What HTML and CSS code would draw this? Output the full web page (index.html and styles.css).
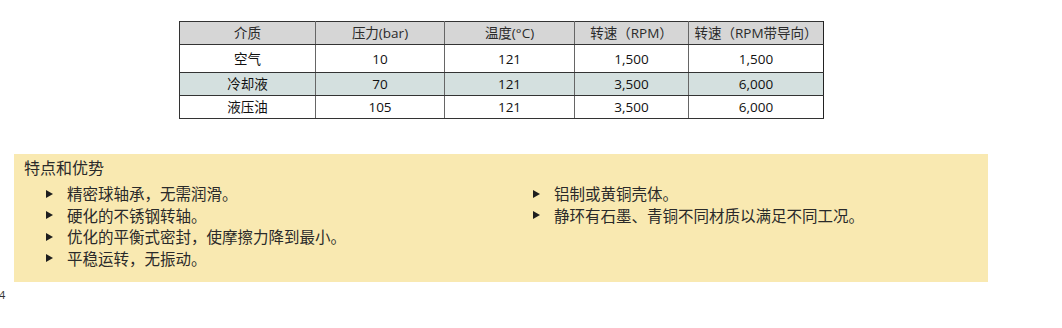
FILE: index.html
```html
<!DOCTYPE html>
<html lang="zh-CN">
<head>
<meta charset="utf-8">
<link rel="stylesheet" href="styles.css">
</head>
<body>
<table class="spec">
  <colgroup>
    <col class="c1"><col class="c2"><col class="c3"><col class="c4"><col class="c5">
  </colgroup>
  <thead>
    <tr class="head">
      <th>介质</th><th>压力(bar)</th><th>温度(°C)</th><th>转速（RPM）</th><th>转速（RPM带导向）</th>
    </tr>
  </thead>
  <tbody>
    <tr class="r1"><td>空气</td><td>10</td><td>121</td><td>1,500</td><td>1,500</td></tr>
    <tr class="r2 shade"><td>冷却液</td><td>70</td><td>121</td><td>3,500</td><td>6,000</td></tr>
    <tr class="r3"><td>液压油</td><td>105</td><td>121</td><td>3,500</td><td>6,000</td></tr>
  </tbody>
</table>

<section class="features">
  <h2 class="title">特点和优势</h2>
  <div class="cols">
    <ul class="list">
      <li>精密球轴承，无需润滑。</li>
      <li>硬化的不锈钢转轴。</li>
      <li>优化的平衡式密封，使摩擦力降到最小。</li>
      <li>平稳运转，无振动。</li>
    </ul>
    <ul class="list">
      <li>铝制或黄铜壳体。</li>
      <li>静环有石墨、青铜不同材质以满足不同工况。</li>
    </ul>
  </div>
</section>

<div class="pagenum">4</div>
</body>
</html>
```

FILE: styles.css
```css
html, body {
  margin: 0;
  padding: 0;
  background: #ffffff;
}

body {
  font-family: "Open Sans", "Noto Sans CJK SC", sans-serif;
  color: #222;
}

.spec {
  border-collapse: collapse;
  margin: 21px 0 0 179px;
  table-layout: fixed;
  width: 644px;
  font-size: 13.5px;
  color: #111;
}

.c1 { width: 136px; }
.c2 { width: 129px; }
.c3 { width: 130px; }
.c4 { width: 114px; }
.c5 { width: 135px; }

.spec th,
.spec td {
  border-top: 1px solid #333;
  border-bottom: 1px solid #333;
  border-left: 1px solid #666;
  border-right: 1px solid #666;
  padding: 0;
  text-align: center;
  font-weight: 400;
  line-height: 18px;
}

.spec th:first-child,
.spec td:first-child {
  border-left-color: #333;
}

.spec th:last-child,
.spec td:last-child {
  border-right-color: #222;
}

.head th {
  background: #d6d6d6;
  height: 22px;
  color: #2a2a2a;
}

.r1 td { height: 27px; }
.r2 td { height: 22px; }
.r3 td { height: 22px; }

.shade td {
  background: #d4e0df;
}

.features {
  margin: 35px 0 0 14px;
  width: 974px;
  height: 128px;
  box-sizing: border-box;
  background: #f9e9b1;
  padding: 2px 0 0 10px;
  font-family: "Noto Sans CJK SC", sans-serif;
  color: #2a2a2a;
}

.title {
  margin: 0;
  font-size: 16px;
  font-weight: 400;
  line-height: 22px;
}

.cols {
  display: grid;
  grid-template-columns: 487px 1fr;
  padding: 5px 0 0 22px;
}

.list {
  list-style: none;
  margin: 0;
  padding: 0;
}

.list li {
  display: flex;
  align-items: center;
  font-size: 15.5px;
  line-height: 21.5px;
  height: 21.5px;
}

.list li::before {
  content: "";
  flex: none;
  width: 0;
  height: 0;
  border-top: 4px solid transparent;
  border-bottom: 4px solid transparent;
  border-left: 7px solid #1e1e1e;
  margin-right: 14px;
}

.pagenum {
  margin: 6px 0 0 -1px;
  font-family: "Open Sans", sans-serif;
  font-size: 11px;
  line-height: 14px;
  color: #333;
}
```
